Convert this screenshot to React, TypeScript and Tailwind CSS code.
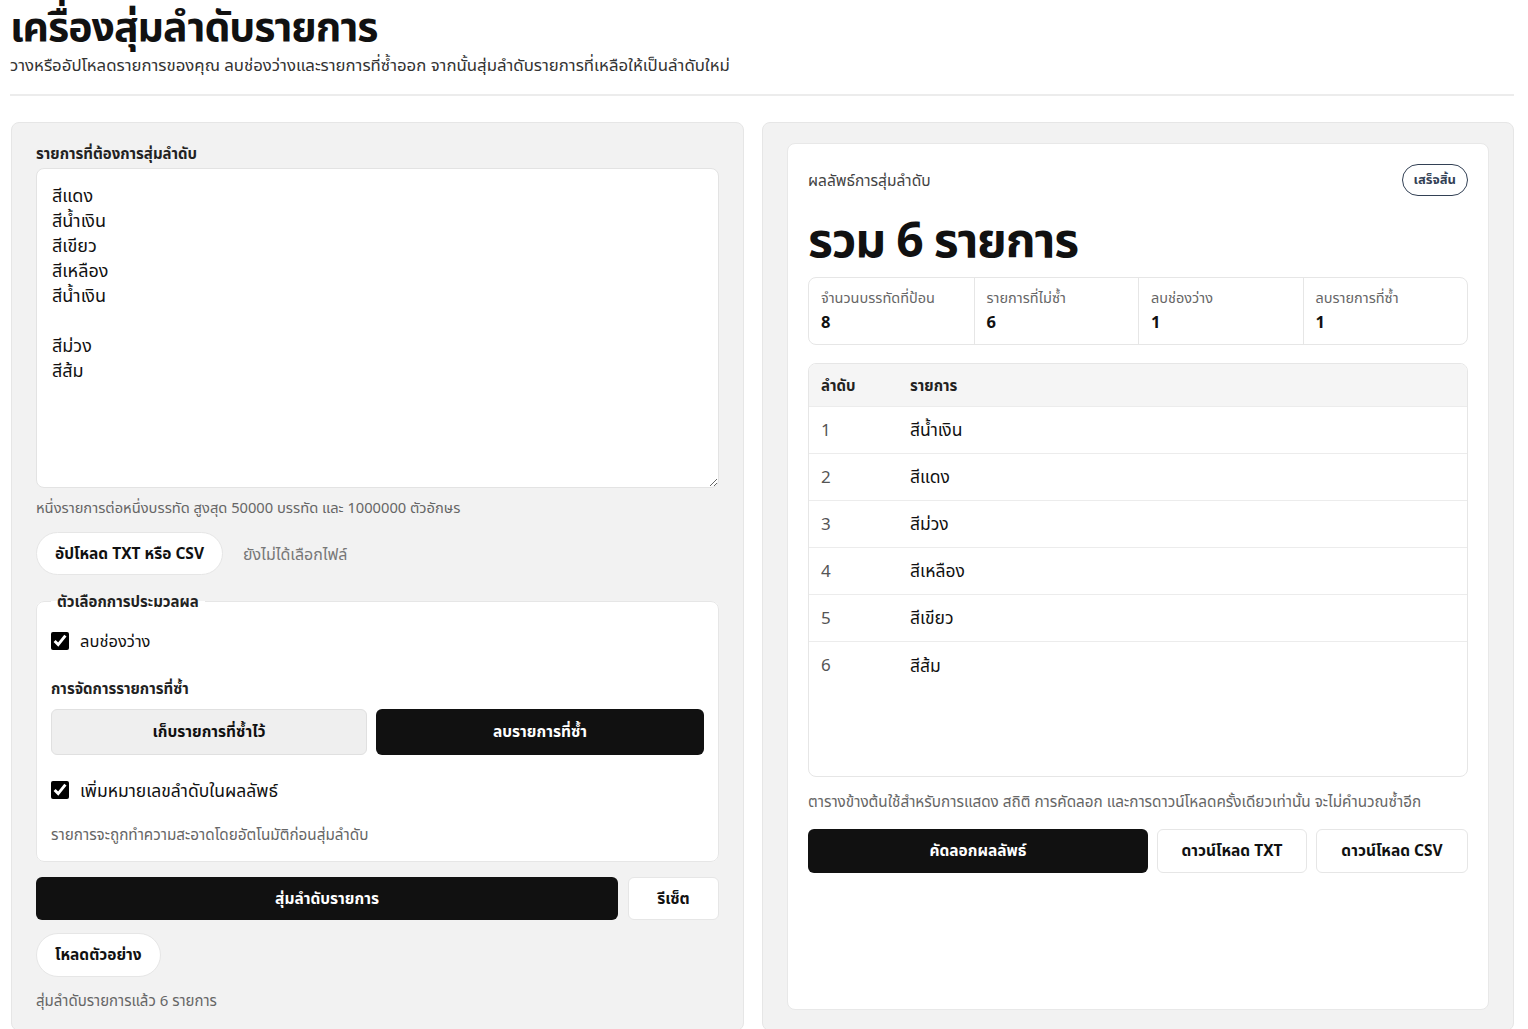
import { useState } from 'react';

const inputText = ['สีแดง', 'สีน้ำเงิน', 'สีเขียว', 'สีเหลือง', 'สีน้ำเงิน', '', 'สีม่วง', 'สีส้ม'].join('\n');

const results = ['สีน้ำเงิน', 'สีแดง', 'สีม่วง', 'สีเหลือง', 'สีเขียว', 'สีส้ม'];

const stats = [
  { label: 'จำนวนบรรทัดที่ป้อน', value: 8 },
  { label: 'รายการที่ไม่ซ้ำ', value: 6 },
  { label: 'ลบช่องว่าง', value: 1 },
  { label: 'ลบรายการที่ซ้ำ', value: 1 },
];

export default function App() {
  const [text, setText] = useState(inputText);
  const [trimBlank, setTrimBlank] = useState(true);
  const [numbered, setNumbered] = useState(true);
  const [dupMode, setDupMode] = useState<'keep' | 'remove'>('remove');

  const segBtn = (active: boolean) =>
    active
      ? 'h-[46px] rounded-md bg-[#111] text-[15.5px] font-bold text-white'
      : 'h-[46px] rounded-md border border-[#e0e0e0] bg-[#efefef] text-[15.5px] font-bold text-[#111]';

  return (
    <div
      className="min-h-screen bg-white pl-[11px] pr-[14px] text-[#111]"
      style={{ fontFamily: '"Noto Sans", "Noto Sans Thai", "Noto Sans Thai UI", sans-serif' }}
    >
      <header className="-ml-px border-b-2 border-[#ececec] pb-[18px]">
        <h1 className="text-[41px] font-bold leading-[50px] tracking-tight">เครื่องสุ่มลำดับรายการ</h1>
        <p className="mt-[4px] text-[16.8px] leading-[22px] text-[#333]">
          วางหรืออัปโหลดรายการของคุณ ลบช่องว่างและรายการที่ซ้ำออก จากนั้นสุ่มลำดับรายการที่เหลือให้เป็นลำดับใหม่
        </p>
      </header>

      <main className="mt-[26px] grid grid-cols-[733px_1fr] gap-[18px]">
        {/* left: input */}
        <section className="flex flex-col rounded-lg border border-[#e6e6e6] bg-[#f2f2f2] px-6 py-5">
          <label className="mb-[5px] text-[15px] font-bold leading-5 text-[#222]">รายการที่ต้องการสุ่มลำดับ</label>
          <textarea
            value={text}
            onChange={(e) => setText(e.target.value)}
            className="h-[320px] w-full rounded-lg border border-[#e3e3e3] bg-white px-[15px] py-[14px] text-[18px] leading-[25px] text-[#111] outline-none"
          />
          <p className="mt-[9px] text-[14.7px] leading-5 text-[#666]">
            หนึ่งรายการต่อหนึ่งบรรทัด สูงสุด 50000 บรรทัด และ 1000000 ตัวอักษร
          </p>

          <div className="mt-[15px] flex items-center gap-5">
            <button className="h-[43px] rounded-full border border-[#e6e6e6] bg-white px-[18px] text-[15.5px] font-bold">
              อัปโหลด TXT หรือ CSV
            </button>
            <span className="text-[16px] text-[#777]">ยังไม่ได้เลือกไฟล์</span>
          </div>

          <fieldset className="mt-4 rounded-lg border border-[#e6e6e6] bg-white px-3.5 pb-[17px] pt-[18px]">
            <legend className="px-1.5 text-[15px] font-bold leading-5 text-[#222]">ตัวเลือกการประมวลผล</legend>

            <label className="flex h-6 items-center gap-[11px] text-[16.5px]">
              <input
                type="checkbox"
                checked={trimBlank}
                onChange={(e) => setTrimBlank(e.target.checked)}
                className="h-[18px] w-[18px] accent-black"
              />
              ลบช่องว่าง
            </label>

            <p className="mt-[25px] text-[15px] font-bold leading-5 text-[#222]">การจัดการรายการที่ซ้ำ</p>
            <div className="mt-[11px] grid grid-cols-[314fr_326fr] gap-[9px]">
              <button onClick={() => setDupMode('keep')} className={segBtn(dupMode === 'keep')}>
                เก็บรายการที่ซ้ำไว้
              </button>
              <button onClick={() => setDupMode('remove')} className={segBtn(dupMode === 'remove')}>
                ลบรายการที่ซ้ำ
              </button>
            </div>

            <label className="mt-[23px] flex h-6 items-center gap-[11px] text-[17.5px]">
              <input
                type="checkbox"
                checked={numbered}
                onChange={(e) => setNumbered(e.target.checked)}
                className="h-[18px] w-[18px] accent-black"
              />
              เพิ่มหมายเลขลำดับในผลลัพธ์
            </label>

            <p className="mt-[22px] text-[15.3px] leading-5 text-[#666]">รายการจะถูกทำความสะอาดโดยอัตโนมัติก่อนสุ่มลำดับ</p>
          </fieldset>

          <div className="mt-[15px] flex gap-[10px]">
            <button className="h-[43px] flex-1 rounded-md bg-[#111] text-[15.5px] font-bold text-white">สุ่มลำดับรายการ</button>
            <button className="h-[43px] w-[91px] rounded-md border border-[#e6e6e6] bg-white text-[15.5px] font-bold">รีเซ็ต</button>
          </div>

          <div className="mt-[13px]">
            <button className="h-[44px] rounded-full border border-[#e6e6e6] bg-white px-[18px] text-[15.5px] font-bold">
              โหลดตัวอย่าง
            </button>
          </div>

          <p className="mt-[13px] text-[15px] leading-5 text-[#666]">สุ่มลำดับรายการแล้ว 6 รายการ</p>
        </section>

        {/* right: output */}
        <section className="flex flex-col rounded-lg border border-[#e6e6e6] bg-[#f2f2f2] px-6 py-5">
          <div className="flex flex-1 flex-col rounded-lg border border-[#e8e8e8] bg-white p-5">
            <div className="flex h-8 items-center justify-between">
              <span className="text-[15.5px] leading-5 text-[#444]">ผลลัพธ์การสุ่มลำดับ</span>
              <span className="flex h-8 items-center rounded-full border border-[#334155] px-[11px] text-[13px] font-bold text-[#334155]">
                เสร็จสิ้น
              </span>
            </div>

            <h2 className="mt-[17px] text-[48px] font-bold leading-[52px] tracking-tight">รวม 6 รายการ</h2>

            <div className="mt-3 grid grid-cols-4 overflow-hidden rounded-lg border border-[#e6e6e6]">
              {stats.map((s, i) => (
                <div key={s.label} className={i > 0 ? 'border-l border-[#e6e6e6] px-3 pb-[11px] pt-[10px]' : 'px-3 pb-[11px] pt-[10px]'}>
                  <div className="text-[14.5px] leading-[18px] text-[#666]">{s.label}</div>
                  <div className="mt-[5px] text-[16.5px] font-bold leading-[22px]">{s.value}</div>
                </div>
              ))}
            </div>

            <div className="mt-[18px] h-[414px] overflow-auto rounded-lg border border-[#e6e6e6]">
              <table className="w-full border-collapse text-left">
                <thead>
                  <tr className="h-[42px] bg-[#f5f5f5]">
                    <th className="w-[89px] px-3 text-[15px] font-bold text-[#222]">ลำดับ</th>
                    <th className="px-3 text-[15px] font-bold text-[#222]">รายการ</th>
                  </tr>
                </thead>
                <tbody>
                  {results.map((r, i) => (
                    <tr key={i} className="h-[47px] border-t border-[#ececec]">
                      <td className="px-3 text-[17px] text-[#555]">{i + 1}</td>
                      <td className="px-3 text-[17.5px] text-[#111]">{r}</td>
                    </tr>
                  ))}
                </tbody>
              </table>
            </div>

            <p className="mt-[14px] text-[15.3px] leading-5 text-[#666]">
              ตารางข้างต้นใช้สำหรับการแสดง สถิติ การคัดลอก และการดาวน์โหลดครั้งเดียวเท่านั้น จะไม่คำนวณซ้ำอีก
            </p>

            <div className="mt-[18px] flex gap-[9px]">
              <button className="h-[44px] flex-1 rounded-md bg-[#111] text-[15.5px] font-bold text-white">คัดลอกผลลัพธ์</button>
              <button className="h-[44px] w-[150px] rounded-md border border-[#e6e6e6] bg-white text-[15.5px] font-bold">ดาวน์โหลด TXT</button>
              <button className="h-[44px] w-[152px] rounded-md border border-[#e6e6e6] bg-white text-[15.5px] font-bold">ดาวน์โหลด CSV</button>
            </div>
          </div>
        </section>
      </main>
    </div>
  );
}
